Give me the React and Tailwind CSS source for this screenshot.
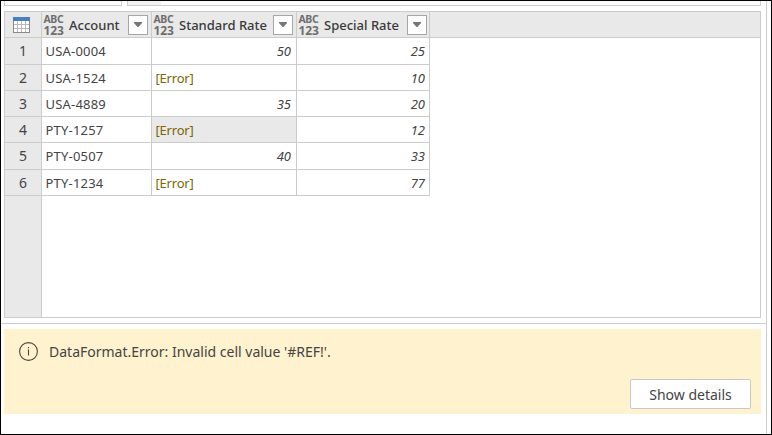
import React from "react";

const rows = [
  { account: "USA-0004", standard: "50", special: "25", height: "h-[27px]" },
  { account: "USA-1524", standard: null, special: "10", height: "h-[26px]" },
  { account: "USA-4889", standard: "35", special: "20", height: "h-[26px]" },
  { account: "PTY-1257", standard: null, special: "12", height: "h-[26px]", selected: true },
  { account: "PTY-0507", standard: "40", special: "33", height: "h-[27px]" },
  { account: "PTY-1234", standard: null, special: "77", height: "h-[26px]" },
];

function TableIcon() {
  return (
    <svg width="17" height="16" viewBox="0 0 17 16" shapeRendering="crispEdges">
      <rect x="0" y="0" width="17" height="16" fill="#8a8a8a" />
      <rect x="1" y="4" width="15" height="11" fill="#b9b9b9" />
      <rect x="0" y="0" width="17" height="4" fill="#4a7fbd" />
      <g fill="#fff">
        {[4, 8, 12].map((y) =>
          [1, 5, 9, 13].map((x) => <rect key={`${x}-${y}`} x={x} y={y} width="3" height="3" />)
        )}
      </g>
    </svg>
  );
}

function HeaderCell({ label, width, gap }) {
  return (
    <div className={`${width} flex h-full items-center border-r border-[#cccccc]`}>
      <div className="ml-[1.5px] flex w-[21px] shrink-0 flex-col pt-px font-bold text-[#6e6e6e]">
        <span className="text-[10.5px] leading-[11px] tracking-[-0.4px]">ABC</span>
        <span className="text-[12px] leading-[11px] tracking-[-0.1px]">123</span>
      </div>
      <span className="ml-[4.5px] whitespace-nowrap pt-[2px] text-[13px] font-medium text-[#3a3a3a]">{label}</span>
      <div className={`${gap} ml-auto flex h-5 w-5 shrink-0 items-center justify-center border border-[#a6a6a6] bg-white`}>
        <svg width="8" height="5" viewBox="0 0 8 5">
          <path d="M0 0H8V1L4.5 5H3.5L0 1Z" fill="#767676" />
        </svg>
      </div>
    </div>
  );
}

function Row({ row, index }) {
  return (
    <div className={`flex ${row.height} leading-[27px]`}>
      <div className="w-[37px] border-b border-r border-[#cccccc] text-center text-[14px] leading-[26px]">{index}</div>
      <div className="w-[110px] border-b border-r border-[#cccccc] bg-white pl-[3.5px] text-[13px] tracking-[0.2px]">{row.account}</div>
      <div className={`w-[145px] border-b border-r border-[#cccccc] text-[13px] ${row.selected ? "bg-[#e9e9e9]" : "bg-white"}`}>
        {row.standard ? (
          <div className="pr-[5px] text-right italic">{row.standard}</div>
        ) : (
          <div className="pl-[3.5px] tracking-[-0.2px] text-[#7a6500]">[Error]</div>
        )}
      </div>
      <div className="w-[133px] border-b border-r border-[#cccccc] bg-white pr-[4px] text-right text-[13px] italic">{row.special}</div>
    </div>
  );
}

export default function App() {
  return (
    <div className="h-[435px] w-[772px] overflow-hidden border border-black bg-white font-['Noto_Sans',sans-serif] text-[#444]">
      <div className="flex h-[433px] w-[766px] flex-col border-r border-[#cccccc]">
        <div className="flex h-[5px] shrink-0 gap-[5px] pl-[3px]">
          <div className="w-[118px] border-x border-b border-[#cccccc]" />
          <div className="w-[634px] border-x border-b border-[#cccccc]">
            <div className="h-full w-[33px] bg-[#f3f3f3]" />
          </div>
        </div>
        <div className="ml-[3px] mt-[5px] flex h-[307px] w-[757px] shrink-0 flex-col border border-[#cccccc]">
          <div className="flex h-[26px] shrink-0 border-b border-[#cccccc] bg-[#e9e9e9]">
            <div className="flex w-[37px] items-center border-r border-[#cccccc] pl-[8px]">
              <TableIcon />
            </div>
            <HeaderCell label="Account" width="w-[110px]" gap="mr-[3px]" />
            <HeaderCell label="Standard Rate" width="w-[145px]" gap="mr-[3px]" />
            <HeaderCell label="Special Rate" width="w-[133px]" gap="mr-[2px]" />
          </div>
          <div className="flex grow flex-col bg-[linear-gradient(to_right,#e9e9e9_36px,#cccccc_36px,#cccccc_37px,#ffffff_37px)]">
            {rows.map((row, i) => (
              <Row key={row.account} row={row} index={i + 1} />
            ))}
          </div>
        </div>
        <div className="mt-[5px] h-px shrink-0 bg-[#cccccc]" />
        <div className="ml-[3px] mt-[5px] flex h-[85px] w-[757px] shrink-0 flex-col justify-between bg-[#fff2ce] pb-[5px] pl-[15px] pr-[10px] pt-[13px]">
          <div className="flex h-[19px] items-center">
            <svg width="19" height="19" viewBox="0 0 19 19" fill="none" stroke="#4a463c">
              <circle cx="9.5" cy="9.5" r="8.9" strokeWidth="1.1" />
              <path d="M9.5 7.6V13.6M9.5 5V6.3" strokeWidth="1.1" />
            </svg>
            <span className="ml-[11px] whitespace-nowrap text-[14px] leading-[19px]">DataFormat.Error: Invalid cell value '#REF!'.</span>
          </div>
          <button className="flex h-[30px] w-[121px] items-center justify-center self-end rounded-[2px] border border-[#c8c8c8] bg-white text-[14px]">
            Show details
          </button>
        </div>
      </div>
    </div>
  );
}
